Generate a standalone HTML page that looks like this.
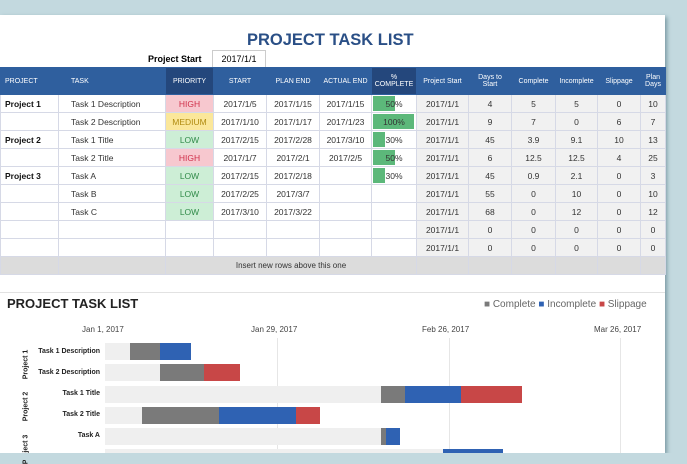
<!DOCTYPE html><html><head><style>
body{margin:0;width:687px;height:460px;background:#c3d9df;font-family:"Liberation Sans",sans-serif;position:relative;overflow:hidden}
.sheet{position:absolute;left:0;top:15px;width:665px;height:438px;background:#fff;box-shadow:2px 2px 4px #7a9aa3}
.a{position:absolute}
table{position:absolute;left:0;top:67px;border-collapse:collapse;table-layout:fixed;font-size:8.5px;color:#333}
td{height:17px;border:1px solid #d6d9e6;padding:0;text-align:center;white-space:nowrap;overflow:hidden}
tr.h td{height:26px;background:#2f5f9e;color:#fff;font-size:7px;border-color:#2f5f9e}
tr.h td.d{background:#24477c}
td.l{text-align:left;padding-left:12px}
td.p{text-align:left;padding-left:4px;font-weight:bold;color:#111}
td.g{background:#f1f1f1}
.hi{background:#f7c8cf;color:#d0304a}.me{background:#fbe79a;color:#b08b10}.lo{background:#cdeed6;color:#2f8a48}
.pc{position:relative}.pc i{position:absolute;left:1px;top:1px;bottom:1px;background:#5cb87a}.pc span{position:relative}
tr.ins td{background:#dcdcdc;height:17px;font-size:8px}
.bar{position:absolute;height:17px}
.lab{position:absolute;font-size:7px;font-weight:bold;color:#222;text-align:right;width:80px;left:20px}
.vl{position:absolute;font-size:7px;font-weight:bold;transform:rotate(-90deg);color:#222}
</style></head><body>
<div class="sheet"></div>
<div class="a" style="left:247px;top:31px;font-size:16.5px;font-weight:bold;color:#2a4f86">PROJECT TASK LIST</div>
<div class="a" style="left:148px;top:54px;font-size:9px;font-weight:bold">Project Start</div>
<div class="a" style="left:212px;top:50px;width:52px;height:16px;border:1px solid #ccc;font-size:9px;text-align:center;line-height:16px">2017/1/1</div>
<table>
<colgroup><col style="width:58px"><col style="width:107px"><col style="width:48px"><col style="width:53px"><col style="width:53px"><col style="width:52px"><col style="width:45px"><col style="width:52px"><col style="width:43px"><col style="width:44px"><col style="width:42px"><col style="width:43px"><col style="width:25px"></colgroup>
<tr class="h"><td class="l" style="padding-left:4px">PROJECT</td><td class="l">TASK</td><td class="d">PRIORITY</td><td>START</td><td>PLAN END</td><td>ACTUAL END</td><td class="d">%<br>COMPLETE</td><td>Project Start</td><td>Days to<br>Start</td><td>Complete</td><td>Incomplete</td><td>Slippage</td><td>Plan<br>Days</td></tr>
<tr><td class="p">Project 1</td><td class="l">Task 1 Description</td><td class="hi">HIGH</td><td>2017/1/5</td><td>2017/1/15</td><td>2017/1/15</td><td class="pc"><i style="width:50%"></i><span>50%</span></td><td class="g">2017/1/1</td><td class="g">4</td><td class="g">5</td><td class="g">5</td><td class="g">0</td><td class="g">10</td></tr>
<tr><td></td><td class="l">Task 2 Description</td><td class="me">MEDIUM</td><td>2017/1/10</td><td>2017/1/17</td><td>2017/1/23</td><td class="pc"><i style="width:93%"></i><span>100%</span></td><td class="g">2017/1/1</td><td class="g">9</td><td class="g">7</td><td class="g">0</td><td class="g">6</td><td class="g">7</td></tr>
<tr><td class="p">Project 2</td><td class="l">Task 1 Title</td><td class="lo">LOW</td><td>2017/2/15</td><td>2017/2/28</td><td>2017/3/10</td><td class="pc"><i style="width:28%"></i><span>30%</span></td><td class="g">2017/1/1</td><td class="g">45</td><td class="g">3.9</td><td class="g">9.1</td><td class="g">10</td><td class="g">13</td></tr>
<tr><td></td><td class="l">Task 2 Title</td><td class="hi">HIGH</td><td>2017/1/7</td><td>2017/2/1</td><td>2017/2/5</td><td class="pc"><i style="width:50%"></i><span>50%</span></td><td class="g">2017/1/1</td><td class="g">6</td><td class="g">12.5</td><td class="g">12.5</td><td class="g">4</td><td class="g">25</td></tr>
<tr><td class="p">Project 3</td><td class="l">Task A</td><td class="lo">LOW</td><td>2017/2/15</td><td>2017/2/18</td><td></td><td class="pc"><i style="width:28%"></i><span>30%</span></td><td class="g">2017/1/1</td><td class="g">45</td><td class="g">0.9</td><td class="g">2.1</td><td class="g">0</td><td class="g">3</td></tr>
<tr><td></td><td class="l">Task B</td><td class="lo">LOW</td><td>2017/2/25</td><td>2017/3/7</td><td></td><td></td><td class="g">2017/1/1</td><td class="g">55</td><td class="g">0</td><td class="g">10</td><td class="g">0</td><td class="g">10</td></tr>
<tr><td></td><td class="l">Task C</td><td class="lo">LOW</td><td>2017/3/10</td><td>2017/3/22</td><td></td><td></td><td class="g">2017/1/1</td><td class="g">68</td><td class="g">0</td><td class="g">12</td><td class="g">0</td><td class="g">12</td></tr>
<tr><td></td><td></td><td></td><td></td><td></td><td></td><td></td><td class="g">2017/1/1</td><td class="g">0</td><td class="g">0</td><td class="g">0</td><td class="g">0</td><td class="g">0</td></tr>
<tr><td></td><td></td><td></td><td></td><td></td><td></td><td></td><td class="g">2017/1/1</td><td class="g">0</td><td class="g">0</td><td class="g">0</td><td class="g">0</td><td class="g">0</td></tr>
<tr class="ins"><td></td><td></td><td colspan="5">Insert new rows above this one</td><td></td><td></td><td></td><td></td><td></td><td></td></tr>
</table>
<div class="a" style="left:0;top:292px;width:665px;border-top:1px solid #e2e2e2"></div>
<div class="a" style="left:7px;top:296px;font-size:13px;font-weight:bold;color:#222">PROJECT TASK LIST</div>
<div class="a" style="left:484px;top:299px;font-size:10px;color:#666"><span style="color:#7a7a7a">■</span> Complete <span style="color:#2f62b3">■</span> Incomplete <span style="color:#c84747">■</span> Slippage</div>
<div class="a" style="left:82px;top:325px;font-size:8px;color:#444">Jan 1, 2017</div>
<div class="a" style="left:251px;top:325px;font-size:8px;color:#444">Jan 29, 2017</div>
<div class="a" style="left:422px;top:325px;font-size:8px;color:#444">Feb 26, 2017</div>
<div class="a" style="left:594px;top:325px;font-size:8px;color:#444">Mar 26, 2017</div>
<div class="a" style="left:277px;top:338px;width:1px;height:115px;background:#e6e6e6"></div>
<div class="a" style="left:449px;top:338px;width:1px;height:115px;background:#e6e6e6"></div>
<div class="a" style="left:620px;top:338px;width:1px;height:115px;background:#e6e6e6"></div>
<div class="bar" style="left:105px;top:343px;width:30px;background:#efefef"></div>
<div class="bar" style="left:130px;top:343px;width:30px;background:#7a7a7a"></div><div class="bar" style="left:160px;top:343px;width:31px;background:#2f62b3"></div>
<div class="bar" style="left:105px;top:364px;width:55px;background:#efefef"></div>
<div class="bar" style="left:160px;top:364px;width:44px;background:#7a7a7a"></div><div class="bar" style="left:204px;top:364px;width:36px;background:#c84747"></div>
<div class="bar" style="left:105px;top:386px;width:276px;background:#efefef"></div>
<div class="bar" style="left:381px;top:386px;width:24px;background:#7a7a7a"></div><div class="bar" style="left:405px;top:386px;width:56px;background:#2f62b3"></div><div class="bar" style="left:461px;top:386px;width:61px;background:#c84747"></div>
<div class="bar" style="left:105px;top:407px;width:37px;background:#efefef"></div>
<div class="bar" style="left:142px;top:407px;width:77px;background:#7a7a7a"></div><div class="bar" style="left:219px;top:407px;width:77px;background:#2f62b3"></div><div class="bar" style="left:296px;top:407px;width:24px;background:#c84747"></div>
<div class="bar" style="left:105px;top:428px;width:276px;background:#efefef"></div>
<div class="bar" style="left:381px;top:428px;width:5px;background:#7a7a7a"></div><div class="bar" style="left:386px;top:428px;width:14px;background:#2f62b3"></div>
<div class="bar" style="left:105px;top:449px;width:338px;height:4px;background:#efefef"></div>
<div class="bar" style="left:443px;top:449px;width:60px;height:4px;background:#2f62b3"></div>
<div class="lab" style="top:348px">Task 1 Description</div>
<div class="lab" style="top:369px">Task 2 Description</div>
<div class="lab" style="top:390px">Task 1 Title</div>
<div class="lab" style="top:411px">Task 2 Title</div>
<div class="lab" style="top:432px">Task A</div>
<div class="vl" style="left:11px;top:361px">Project 1</div>
<div class="vl" style="left:11px;top:403px">Project 2</div>
<div class="vl" style="left:11px;top:446px">Project 3</div>
<div class="a" style="left:0;top:453px;width:687px;height:7px;background:#c3d9df"></div>
</body></html>
